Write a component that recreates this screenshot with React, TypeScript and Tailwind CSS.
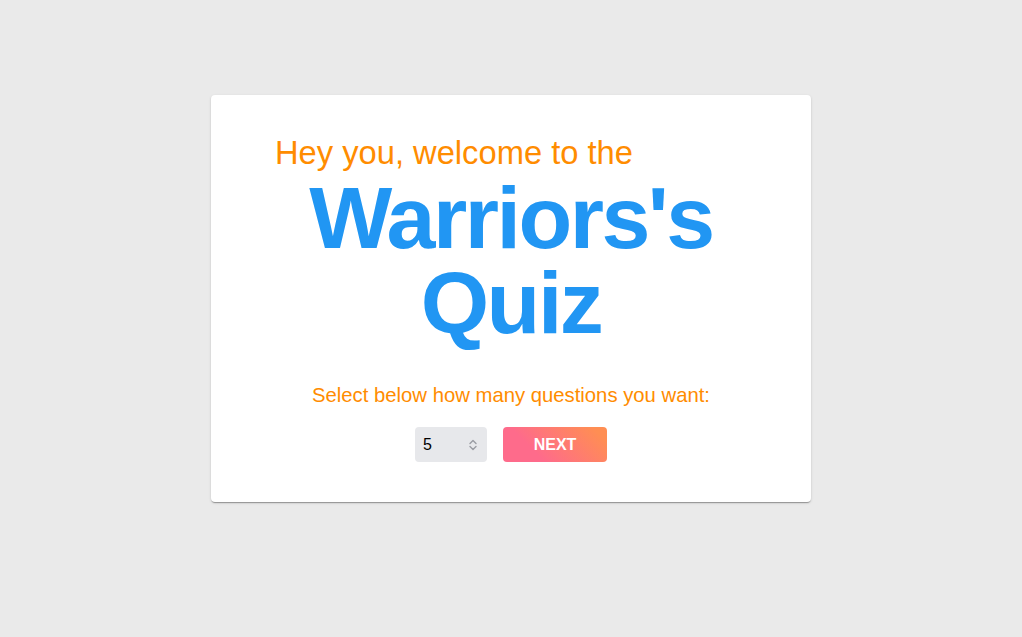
import { useState } from "react";

function Spinner() {
  return (
    <svg viewBox="0 0 16 16" className="w-4 h-4 shrink-0 text-[#9a9ca3]" fill="none">
      <path d="M5 6.5 8 3.5l3 3" stroke="currentColor" strokeWidth="1.4" strokeLinecap="round" strokeLinejoin="round" />
      <path d="M5 9.5l3 3 3-3" stroke="currentColor" strokeWidth="1.4" strokeLinecap="round" strokeLinejoin="round" />
    </svg>
  );
}

export default function App() {
  const [count, setCount] = useState("5");

  return (
    <div className="min-h-screen bg-[#eaeaea] pt-[95px] font-['Liberation_Sans',Arial,sans-serif]">
      <div className="mx-auto w-[600px] rounded bg-white pt-10 pb-10 shadow-[0_2px_1px_-1px_rgba(0,0,0,0.2),0_1px_1px_0_rgba(0,0,0,0.14),0_1px_3px_0_rgba(0,0,0,0.12)]">
        {/* Heading */}
        <p className="ml-[64px] text-[32.7px] leading-[36px] text-[#ff8c00]">
          Hey you, welcome to the
        </p>
        <h1 className="mt-1 text-center text-[88px] font-bold leading-[85px] tracking-[-2.5px] text-[#2196f3]">
          Warriors's
          <br />
          Quiz
        </h1>

        {/* Question count */}
        <p className="mt-[38px] text-center text-[20.3px] leading-6 text-[#ff8c00]">
          Select below how many questions you want:
        </p>
        <div className="mt-5 flex items-center justify-center gap-4">
          <div className="flex h-[35px] w-[72px] items-center rounded bg-[#e7e8eb] pl-2 pr-[6px]">
            <input
              type="text"
              value={count}
              onChange={(e) => setCount(e.target.value)}
              className="w-full min-w-0 bg-transparent text-base text-black outline-none"
            />
            <Spinner />
          </div>
          <button className="h-[35px] w-[104px] rounded bg-[linear-gradient(45deg,#fe6b8b_30%,#ff8e53_90%)] text-base font-bold text-white">
            NEXT
          </button>
        </div>
      </div>
    </div>
  );
}
